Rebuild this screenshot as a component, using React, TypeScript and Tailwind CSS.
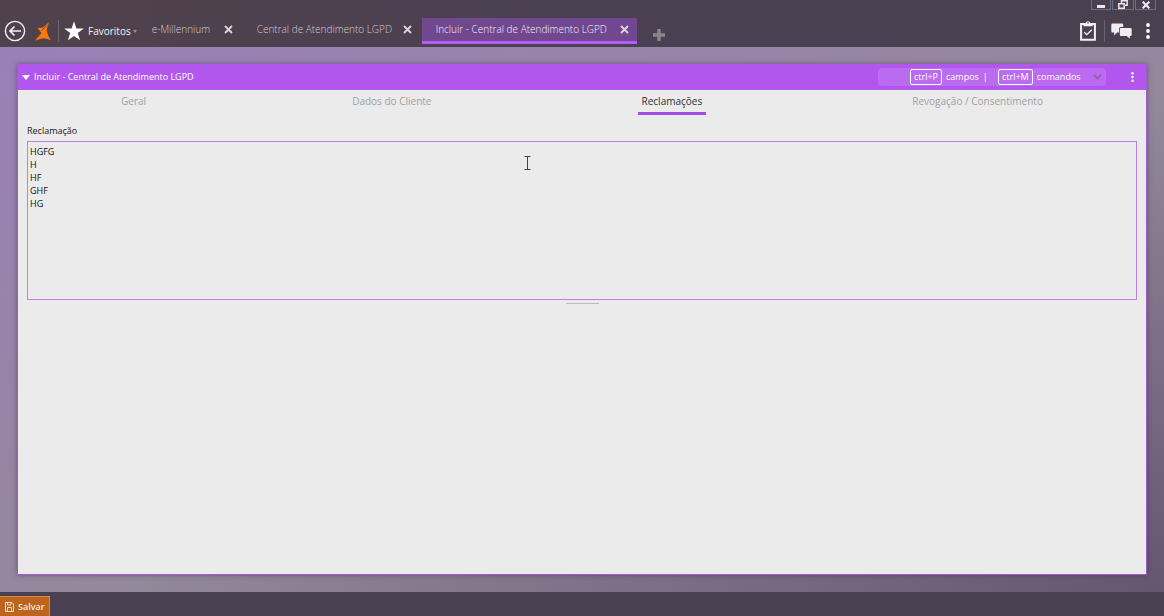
import { useState } from 'react';

const openTabs = [
  { label: 'e-Millennium', width: 'w-[105px]' },
  { label: 'Central de Atendimento LGPD', width: 'w-[179px]' },
  { label: 'Incluir - Central de Atendimento LGPD', width: 'w-[215px]', active: true },
];

const sections = ['Geral', 'Dados do Cliente', 'Reclamações', 'Revogação / Consentimento'];

const CloseIcon = () => (
  <svg width="9" height="9" viewBox="0 0 9 9" stroke="#dcd6e0" strokeWidth="1.8" aria-hidden="true">
    <path d="M1 1l7 7M8 1L1 8" />
  </svg>
);

const DotsIcon = ({ className }: { className: string }) => (
  <svg className={className} viewBox="0 0 4 16" fill="#fff" aria-hidden="true">
    <circle cx="2" cy="2" r="1.9" />
    <circle cx="2" cy="8" r="1.9" />
    <circle cx="2" cy="14" r="1.9" />
  </svg>
);

const WindowControls = () => (
  <div className="flex h-[10px] justify-end pr-2">
    <button aria-label="Minimizar" className="flex w-5 items-center justify-center border border-t-0 border-[#657286]">
      <svg width="8" height="8" viewBox="0 0 8 8" aria-hidden="true">
        <path d="M0 4h8v3H0z" fill="#e8e8ec" />
      </svg>
    </button>
    <button aria-label="Restaurar" className="ml-px flex w-[22px] items-center justify-center border border-t-0 border-[#657286]">
      <svg width="10" height="9" viewBox="0 0 10 9" fill="none" stroke="#e8e8ec" strokeWidth="1.5" aria-hidden="true">
        <path d="M3.5 3V.8h5.7v4.4H7M.8 3.7h5.4v4.5H.8z" />
      </svg>
    </button>
    <button aria-label="Fechar" className="ml-px flex w-[21px] items-center justify-center border border-t-0 border-[#657286]">
      <svg width="8" height="8" viewBox="0 0 8 8" stroke="#f1f1f3" strokeWidth="2" aria-hidden="true">
        <path d="M.7 .7l6.6 6.6M7.3 .7L.7 7.3" />
      </svg>
    </button>
  </div>
);

const TopBar = () => (
  <header className="flex h-[47px] bg-gradient-to-r from-[#50424c] via-[#4b4052] to-[#4a4050]">
    <div className="flex items-center pt-[15px] pl-1">
      <button aria-label="Voltar">
        <svg width="22" height="22" viewBox="0 0 22 22" fill="none" stroke="#f3f1f4" aria-hidden="true">
          <circle cx="11" cy="11" r="9.6" strokeWidth="1.4" />
          <path d="M17 11H6M10.5 6.500L6 11l4.500 4.500" strokeWidth="1.7" />
        </svg>
      </button>
      <svg className="ml-2" width="18" height="19" viewBox="0 0 18 19" fill="#fb7908" aria-hidden="true">
        <path d="M15 .3L12.500 8q1 5.500 4.300 10.500Q13.500 16.800 9.800 16.200 5 16.800.8 18.700L7.500 11 3.500 6l5.200-.2z" />
        <path d="M13.500 2.800L8 8.300" stroke="#4e4250" strokeWidth=".8" />
      </svg>
      <span className="ml-[6px] h-[22px] w-px bg-[#6d6473]" />
      <button className="ml-[5px] flex items-center text-[10px] text-[#f5f2f6]">
        <svg width="20" height="20" viewBox="0 0 20 20" fill="#fff" aria-hidden="true">
          <path d="M10 .3l2.4 7.1h7.4l-6 4.5 2.3 7.4L10 14.9l-6.1 4.4 2.3-7.4-6-4.5h7.4z" />
        </svg>
        <span className="ml-1">Favoritos</span>
        <svg className="ml-[2px]" width="4" height="3" viewBox="0 0 4 3" fill="#9a92a0" aria-hidden="true">
          <path d="M0 0h4L2 3z" />
        </svg>
      </button>
    </div>
    <nav className="ml-px flex pt-[18px]">
      {openTabs.map((tab) => (
        <div
          key={tab.label}
          className={`flex h-[26px] items-center justify-between border-b-[3px] pl-[14px] ${tab.width} ${
            tab.active ? 'border-[#b35df2] bg-[#71488f] pr-2 text-[#f4eef8]' : 'border-transparent pr-[10px] text-[#d0c9d5]'
          }`}
        >
          <button className="pb-[2px] text-[10px] leading-4 font-light whitespace-nowrap">{tab.label}</button>
          <button aria-label={`Fechar ${tab.label}`}>
            <CloseIcon />
          </button>
        </div>
      ))}
      <button aria-label="Nova aba" className="ml-4 h-[34px]">
        <svg width="12" height="12" viewBox="0 0 12 12" fill="#8b8589" aria-hidden="true">
          <path d="M4.3 0h3.4v4.3H12v3.4H7.7V12H4.3V7.7H0V4.3h4.3z" />
        </svg>
      </button>
    </nav>
    <div className="ml-auto">
      <WindowControls />
      <div className="flex h-[41px] items-center justify-end pr-[14px]">
        <button aria-label="Tarefas">
          <svg width="16" height="21" viewBox="0 0 16 21" fill="none" aria-hidden="true">
            <path d="M1.1 4.1h13.8v15.6H1.1z" stroke="#f5f3f6" strokeWidth="2" />
            <path d="M3.5 6.3V3h2.2a2.4 2.4 0 0 1 4.6 0h2.2v3.3z" fill="#f5f3f6" />
            <circle cx="8" cy="2.8" r=".8" fill="#4b4052" />
            <path d="M4.3 12.3l2.5 2.4 5-5" stroke="#f5f3f6" strokeWidth="1.3" />
          </svg>
        </button>
        <span className="ml-2 h-[22px] w-px bg-[#6d6473]" />
        <button aria-label="Mensagens" className="ml-[6px]">
          <svg width="21" height="16" viewBox="0 0 21 16" fill="#efedf0" aria-hidden="true">
            <path d="M1.500 .5h9.500q1.200 0 1.200 1.200V4H10Q8 4 8 6v3.500H6L3.200 12.500v-3H1.500Q.3 9.500 .3 8.300V1.700Q.3.500 1.500.500z" />
            <path d="M10 5h9.500q1.200 0 1.200 1.200v5.600q0 1.200-1.200 1.200h-.7v2.700L15.800 13H10q-1.200 0-1.200-1.200V6.200Q8.800 5 10 5z" />
          </svg>
        </button>
        <button aria-label="Mais opções" className="ml-[14px]">
          <DotsIcon className="h-4 w-1" />
        </button>
      </div>
    </div>
  </header>
);

const PanelHeader = () => (
  <div className="flex h-[26px] items-center bg-[#b157ee] pr-3 pl-1 text-white">
    <button aria-label="Recolher">
      <svg width="8" height="5" viewBox="0 0 8 5" fill="#fff" aria-hidden="true">
        <path d="M0 0h8L4 5z" />
      </svg>
    </button>
    <h1 className="ml-1 text-[9px] font-medium">Incluir - Central de Atendimento LGPD</h1>
    <div className="ml-auto flex h-[18px] w-[228px] items-center rounded-sm bg-[#bb6bef] pr-1 pl-8 text-[9px]">
      <kbd className="flex h-4 w-8 items-center justify-center rounded-xs border border-white font-[inherit]">ctrl+P</kbd>
      <span className="ml-1">campos</span>
      <span className="ml-1">|</span>
      <kbd className="ml-[10px] flex h-4 w-[35px] items-center justify-center rounded-xs border border-white font-[inherit]">ctrl+M</kbd>
      <span className="ml-1">comandos</span>
      <button aria-label="Abrir comandos" className="ml-auto">
        <svg width="9" height="6" viewBox="0 0 9 6" fill="none" stroke="#9460b5" strokeWidth="2" aria-hidden="true">
          <path d="M.8 .8l3.700 3.700L8.200 .8" />
        </svg>
      </button>
    </div>
    <button aria-label="Opções do painel" className="ml-[25px]">
      <DotsIcon className="h-[10px] w-[3px]" />
    </button>
  </div>
);

const App = () => {
  const [section, setSection] = useState('Reclamações');
  const [complaint, setComplaint] = useState('HGFG\nH\nHF\nGHF\nHG');

  return (
    <div className="flex min-h-screen flex-col bg-[#4b4052] font-['Open_Sans','Noto_Sans',sans-serif]">
      <TopBar />
      <main className="flex grow flex-col bg-gradient-to-br from-[#9a80b8] via-[#94889b] via-55% to-[#65566f] p-[17px]">
        <section className="flex grow flex-col border border-t-0 border-[#a05ccc] bg-[#ebebeb] shadow-[0_0_5px_rgba(60,40,70,0.5)]">
          <PanelHeader />
          <div className="flex justify-around text-[10px]">
            {sections.map((name) => (
              <button
                key={name}
                onClick={() => setSection(name)}
                className={`h-[25px] border-b-[3px] leading-4 ${
                  name === section ? 'border-[#a44fe4] px-1 text-[#303030]' : 'border-transparent text-[#a0a0a0]'
                }`}
              >
                {name}
              </button>
            ))}
          </div>
          <div className="px-[9px] pt-2">
            <label htmlFor="reclamacao" className="block pb-[2px] text-[9px] leading-4 text-[#202020]">
              Reclamação
            </label>
            <textarea
              id="reclamacao"
              value={complaint}
              onChange={(e) => setComplaint(e.target.value)}
              className="block h-[159px] w-full resize-none border border-[#bd80e4] bg-[#ebebeb] px-[2px] py-[3px] text-[9px] leading-[13px] text-[#101010] outline-none"
            />
            <div className="mx-auto mt-[3px] w-[33px] border-t border-[#bcbcbc]" />
          </div>
        </section>
      </main>
      <footer className="flex h-6 bg-[#4b4052] pt-1">
        <button className="flex w-[50px] items-center border-t border-r border-[#d98a45] bg-[#bd651f] pl-[5px] text-[9px] font-semibold text-[#f8e9db]">
          <svg width="9" height="10" viewBox="0 0 9 10" fill="none" stroke="#f5dfcb" aria-hidden="true">
            <path d="M.5 .5h6.500l1.500 1.500v7.500h-8z" />
            <path d="M2.500 .5v2.500h3.500V.5M2.500 9.500v-4h4v4" />
          </svg>
          <span className="ml-1">Salvar</span>
        </button>
      </footer>
      {/* text pointer */}
      <svg className="pointer-events-none absolute top-[156px] left-[524px]" width="7" height="14" viewBox="0 0 7 14" stroke="#444" fill="none" aria-hidden="true">
        <path d="M.5 .5h6M3.500 .5v13M.5 13.500h6" />
      </svg>
    </div>
  );
};

export default App;
